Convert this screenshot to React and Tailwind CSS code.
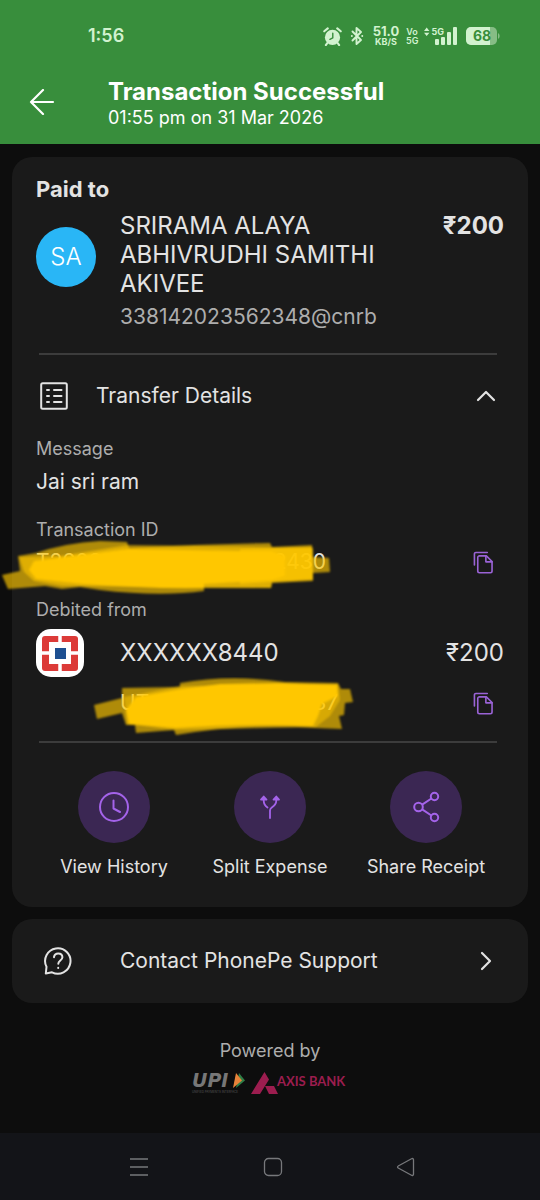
import { useState } from "react";

const actions = [
  { label: "View History", icon: ClockIcon },
  { label: "Split Expense", icon: SplitIcon },
  { label: "Share Receipt", icon: ShareIcon },
];

function ClockIcon() {
  return (
    <svg width="32" height="32" viewBox="0 0 32 32" fill="none" stroke="#a463ea" strokeWidth="2" strokeLinecap="round" strokeLinejoin="round">
      <circle cx="16" cy="16" r="14" />
      <path d="M15.500 9.500v8l6.500 3.500" />
    </svg>
  );
}

function SplitIcon() {
  return (
    <svg width="32" height="32" viewBox="0 0 32 32" fill="none" stroke="#a463ea" strokeWidth="1.800" strokeLinecap="round" strokeLinejoin="round">
      <path d="M16 27v-7.500c0-1.500.6-2.200 1.800-3 3-2 4.500-4 4.500-7V7M13.500 16.500C11 14.800 9.700 12.500 9.700 9.500V7" />
      <path d="M7 8.500l2.700-3L12.500 8.500zM19.500 8.500l2.800-3L25 8.500z" fill="#a463ea" />
    </svg>
  );
}

function ShareIcon() {
  return (
    <svg width="32" height="32" viewBox="0 0 32 32" fill="none" stroke="#a463ea" strokeWidth="2">
      <circle cx="8.500" cy="16" r="4.300" />
      <circle cx="24.500" cy="5.500" r="3.700" />
      <circle cx="24.500" cy="26.500" r="3.700" />
      <path d="M12.200 13.700l9.200-6.200M12.200 18.300l9.200 6.200" />
    </svg>
  );
}

function CopyButton({ label }) {
  return (
    <button type="button" aria-label={label} className="mr-[11px]">
      <svg width="20" height="23" viewBox="0 0 21 24" fill="none" stroke="#9a63d6" strokeWidth="1.700" strokeLinecap="round" strokeLinejoin="round">
        <path d="M1.500 14.500V3a1.500 1.500 0 0 1 1.500-1.500h12" />
        <path d="M7 5h7l6 6v10a1.800 1.800 0 0 1-1.800 1.800H6.800A1.800 1.800 0 0 1 5 21V6.800A1.800 1.800 0 0 1 7 5z" />
        <path d="M13.500 5.200V11.300H20" />
      </svg>
    </button>
  );
}

function StatusBar() {
  return (
    <div className="flex h-[72px] items-center justify-between pr-10 pl-[88px] text-[#d2f2cf]">
      <span className="text-lg font-semibold">1:56</span>
      <div className="flex items-center">
        <svg width="19" height="19" viewBox="0 0 20 20" fill="currentColor">
          <circle cx="10" cy="11" r="8" />
          <path d="M1.300 4.500L5 1.500M18.700 4.500L15 1.500M4.500 17L3 19M15.500 17l1.500 2" stroke="currentColor" strokeWidth="2.200" strokeLinecap="round" />
          <path d="M10.300 6.500v5L7.300 13" fill="none" stroke="#388e3c" strokeWidth="1.500" strokeLinecap="round" />
        </svg>
        <svg className="ml-2" width="14" height="20" viewBox="0 0 14 20" fill="none" stroke="currentColor" strokeWidth="1.900" strokeLinejoin="round" strokeLinecap="round">
          <path d="M2.500 5.500l8.500 8.500-4.500 4V2L11 6l-8.500 8.500M1.800 10h.1M12.200 10h.1" />
        </svg>
        <div className="ml-2 w-7 text-center font-bold">
          <div className="text-[13px] leading-[11px]">51.0</div>
          <div className="text-[9px] leading-[9px]">KB/S</div>
        </div>
        <div className="ml-1.5 w-3 text-center text-[9px] leading-[9px] font-semibold">
          <div>Vo</div>
          <div>5G</div>
        </div>
        <svg className="ml-1.5" width="34" height="20" viewBox="0 0 34 20" fill="currentColor">
          <path d="M0 5l2.700-3.500L5.400 5zM0 6.800h5.400L2.700 10z" />
          <text x="7.500" y="9" fontSize="9" fontWeight="700" fontFamily="Inter, sans-serif">5G</text>
          <rect x="11" y="13" width="4" height="6" rx="1" />
          <rect x="17" y="11" width="4" height="8" rx="1" />
          <rect x="23" y="6" width="4" height="13" rx="1" />
          <rect x="29" y="1" width="4" height="18" rx="1" />
        </svg>
        <svg className="ml-2" width="34" height="18" viewBox="0 0 34 18">
          <rect width="31" height="18" rx="5" fill="#86bd85" />
          <path d="M5 0h19v18H5a5 5 0 0 1-5-5V5a5 5 0 0 1 5-5z" fill="#d2f2cf" />
          <path d="M32 6a3.500 3.500 0 0 1 0 6z" fill="#86bd85" />
          <text x="16" y="14" textAnchor="middle" fontSize="14" fontWeight="700" fontFamily="Inter, sans-serif" fill="#388e3c">68</text>
        </svg>
      </div>
    </div>
  );
}

// marker strokes hiding the transaction id
function IdMarker() {
  return (
    <svg className="pointer-events-none absolute -top-3 -left-9" width="340" height="64" viewBox="0 536 340 64">
      <g fill="#ffc700" className="blur-[1px]">
        <path opacity="0.65" d="M18 556L36 553Q65 543 100 541L127 542L129 548Q200 544 270 543L272 547L312 545L313 557L329 558L330 572L313 573L313 581L272 583L271 588L204 588L204 591Q160 597 100 590L80 587L62 589L45 586L8 589L2 575L20 571z" />
        <path opacity="0.6" d="M19 557L60 556L128 545L313 548L313 580L272 582L271 588L62 586L34 581L24 572z" />
        <path opacity="0.7" d="M240 549L312 547L313 579L240 584z" />
        <path d="M34 561L88 554L128 549L240 551L271 551L285 556L285 576L272 580L204 584L204 588Q150 589 83 584L36 579L29 570z" />
      </g>
    </svg>
  );
}

function UtrMarker() {
  return (
    <svg className="pointer-events-none absolute -top-3 -left-9" width="360" height="64" viewBox="0 677 360 64">
      <g fill="#ffc700" className="blur-[1px]">
        <path opacity="0.65" d="M94 705L122 698L122 688L180 687L180 683Q230 674 285 682L338 683L341 689L350 689L353 702L345 703L344 715L339 716L342 729L315 728Q245 723 176 735L174 730L136 733L135 725L126 725L122 713L97 719z" />
        <path opacity="0.5" d="M124 697L180 686L338 684L340 700L330 716L316 727L176 730L127 724z" />
        <path d="M136 697L181 689L220 684L280 683L337 685L338 696L322 704L318 716L313 726Q240 723 176 728L129 724L126 710z" />
      </g>
    </svg>
  );
}

function BankLogo() {
  return (
    <svg width="48" height="48" viewBox="0 0 48 48">
      <rect width="48" height="48" rx="15" fill="#fff" />
      <rect x="6" y="7" width="36" height="35" rx="3" fill="#dc3a38" />
      <rect x="13" y="13" width="22" height="22" fill="#fff" />
      <path d="M24 6v37M5 24h38" stroke="#fff" strokeWidth="3.500" />
      <rect x="19" y="19" width="11" height="11" fill="#1d4f91" />
    </svg>
  );
}

function Divider() {
  return <hr className="mr-[7px] ml-[3px] border-t-2 border-[#3c3c3c]" />;
}

function App() {
  const [open, setOpen] = useState(true);

  return (
    <div className="flex min-h-screen flex-col bg-[#0d0d0d] font-['Inter',sans-serif] text-[#e3e3e3]">
      <header className="bg-[#388e3c] pb-[14px]">
        <StatusBar />
        <div className="flex items-start pt-[5px] pl-[29px] text-white">
          <button type="button" aria-label="Back" className="mt-3">
            <svg width="26" height="26" viewBox="0 0 26 26" fill="none" stroke="currentColor" strokeWidth="2.200" strokeLinecap="round" strokeLinejoin="round">
              <path d="M24 13H2M14 1L2 13l12 12" />
            </svg>
          </button>
          <div className="ml-[53px]">
            <h1 className="text-2xl leading-[29px] font-bold">Transaction Successful</h1>
            <p className="text-lg leading-6">01:55 pm on 31 Mar 2026</p>
          </div>
        </div>
      </header>

      <main className="px-3 pt-[13px]">
        <section className="rounded-[20px] bg-[#1a1a1a] px-6 pt-[18px] pb-7">
          <h2 className="text-[22px] leading-7 font-bold">Paid to</h2>
          <div className="mt-2 flex items-start">
            <div className="mt-4 flex size-[60px] shrink-0 items-center justify-center rounded-full bg-[#29b6f6] text-2xl font-light text-white">
              SA
            </div>
            <div className="ml-6 min-w-0 flex-1">
              <p className="max-w-[290px] text-2xl leading-[29px]">SRIRAMA ALAYA ABHIVRUDHI SAMITHI AKIVEE</p>
              <p className="mt-[5px] text-[21px] leading-7 text-[#adadad]">338142023562348@cnrb</p>
            </div>
            <span className="text-2xl leading-[29px] font-bold">₹200</span>
          </div>
          <div className="mt-[22px]">
            <Divider />
          </div>

          <button
            type="button"
            aria-expanded={open}
            onClick={() => setOpen(!open)}
            className="mt-[27px] flex h-7 w-full items-center pr-2 pl-1"
          >
            <svg width="28" height="28" viewBox="0 0 28 28" fill="none" stroke="currentColor" strokeWidth="2" strokeLinecap="round">
              <rect x="1.200" y="1.200" width="25.600" height="25.600" rx="1.500" />
              <path d="M7 8h2M7 14h2M7 20h2M14 8h7.500M14 14h7.500M14 20h7.500" />
            </svg>
            <span className="ml-7 text-[21px] leading-7">Transfer Details</span>
            <svg className="ml-auto" width="20" height="12" viewBox="0 0 20 12" fill="none" stroke="currentColor" strokeWidth="2.200" strokeLinecap="round" strokeLinejoin="round">
              <path d={open ? "M2 10l8-8 8 8" : "M2 2l8 8 8-8"} />
            </svg>
          </button>

          {open && (
            <div>
              <dl>
                <dt className="mt-[27px] text-lg leading-6 text-[#adadad]">Message</dt>
                <dd className="mt-[7px] text-[21px] leading-7">Jai sri ram</dd>
                <dt className="mt-[22px] text-lg leading-6 text-[#adadad]">Transaction ID</dt>
                <dd className="relative mt-[6px] flex h-7 items-center justify-between">
                  <span className="flex w-[290px] justify-between text-[21px]">
                    <span>T2603</span>
                    <span>2430</span>
                  </span>
                  <IdMarker />
                  <CopyButton label="Copy transaction ID" />
                </dd>
                <dt className="mt-[22px] text-lg leading-6 text-[#adadad]">Debited from</dt>
                <dd className="mt-[7px] flex items-center">
                  <BankLogo />
                  <span className="ml-9 text-2xl">XXXXXX8440</span>
                  <span className="ml-auto text-2xl">₹200</span>
                </dd>
                <dd className="relative mt-3 flex h-7 items-center justify-between">
                  <span className="ml-[84px] flex w-[218px] justify-between text-[21px]">
                    <span>UT</span>
                    <span>37</span>
                  </span>
                  <UtrMarker />
                  <CopyButton label="Copy UTR" />
                </dd>
              </dl>
              <div className="mt-6">
                <Divider />
              </div>
            </div>
          )}

          <div className="mt-7 grid grid-cols-3">
            {actions.map(({ label, icon: Icon }) => (
              <button key={label} type="button" className="flex flex-col items-center gap-3">
                <span className="flex size-[72px] items-center justify-center rounded-full bg-[#3b2753]">
                  <Icon />
                </span>
                <span className="text-lg leading-6 whitespace-nowrap">{label}</span>
              </button>
            ))}
          </div>
        </section>

        <a href="#support" className="mt-3 flex h-[84px] items-center rounded-[20px] bg-[#1a1a1a] pr-9 pl-8">
          <svg width="28" height="28" viewBox="0 0 28 28" fill="none" stroke="currentColor" strokeWidth="2" strokeLinecap="round" strokeLinejoin="round">
            <path d="M1.800 26.500L2.500 19.800A12.700 12.700 0 1 1 8 25.300z" />
            <path d="M10 10.200c.3-2.400 2-3.700 4.200-3.700 2.500 0 4.200 1.600 4.200 3.800 0 3.200-4.100 3.300-4.100 6.400M14.200 20.800v.3" />
          </svg>
          <span className="ml-12 text-[21px]">Contact PhonePe Support</span>
          <svg className="ml-auto" width="12" height="20" viewBox="0 0 12 20" fill="none" stroke="currentColor" strokeWidth="2.200" strokeLinecap="round" strokeLinejoin="round">
            <path d="M2 2l8 8-8 8" />
          </svg>
        </a>
      </main>

      <footer className="mt-auto">
        <div className="flex flex-col items-center pb-[38px]">
          <p className="text-lg leading-6 text-[#adadad]">Powered by</p>
          <div className="mt-2 flex items-center">
            <svg width="56" height="24" viewBox="0 0 56 24" role="img" aria-label="UPI">
              <text x="1" y="16" fontSize="19" fontStyle="italic" fontWeight="700" fontFamily="'DejaVu Sans', sans-serif" fill="#777">UPI</text>
              <path d="M48 2l6 7.500L45 17z" fill="#2e7d46" />
              <path d="M45 2l6 7.500L42 17z" fill="#e8833a" />
              <text x="1" y="22" fontSize="3" fontFamily="Inter, sans-serif" fill="#555">UNIFIED PAYMENTS INTERFACE</text>
            </svg>
            <svg className="ml-1" width="98" height="24" viewBox="0 0 98 24" role="img" aria-label="Axis Bank" fill="#9c1d4f">
              <path d="M13.500 1L18 8.500 9 23H0zM14 15h9l4 8H18z" />
              <text x="26" y="15" fontSize="13" fontWeight="700" fontFamily="Lato, sans-serif">AXIS BANK</text>
            </svg>
          </div>
        </div>
        <nav className="flex h-[67px] items-center justify-between bg-[#131418] pr-[124px] pl-[129px] text-[#77787b]">
          <button type="button" aria-label="Recent apps">
            <svg width="20" height="20" viewBox="0 0 20 20" stroke="currentColor" strokeWidth="1.500">
              <path d="M1 2h18M1 10h18M1 18h18" />
            </svg>
          </button>
          <button type="button" aria-label="Home">
            <svg width="20" height="20" viewBox="0 0 20 20" fill="none" stroke="currentColor" strokeWidth="1.300">
              <rect x="1.500" y="1.500" width="17" height="17" rx="4" />
            </svg>
          </button>
          <button type="button" aria-label="Back to previous app">
            <svg width="20" height="20" viewBox="0 0 20 20" fill="none" stroke="currentColor" strokeWidth="1.300" strokeLinejoin="round">
              <path d="M2.200 9l13.300-7.300a1.300 1.300 0 0 1 2 1.100v14.400a1.300 1.300 0 0 1-2 1.100L2.200 11a1.100 1.100 0 0 1 0-2z" />
            </svg>
          </button>
        </nav>
      </footer>
    </div>
  );
}

export default App;
